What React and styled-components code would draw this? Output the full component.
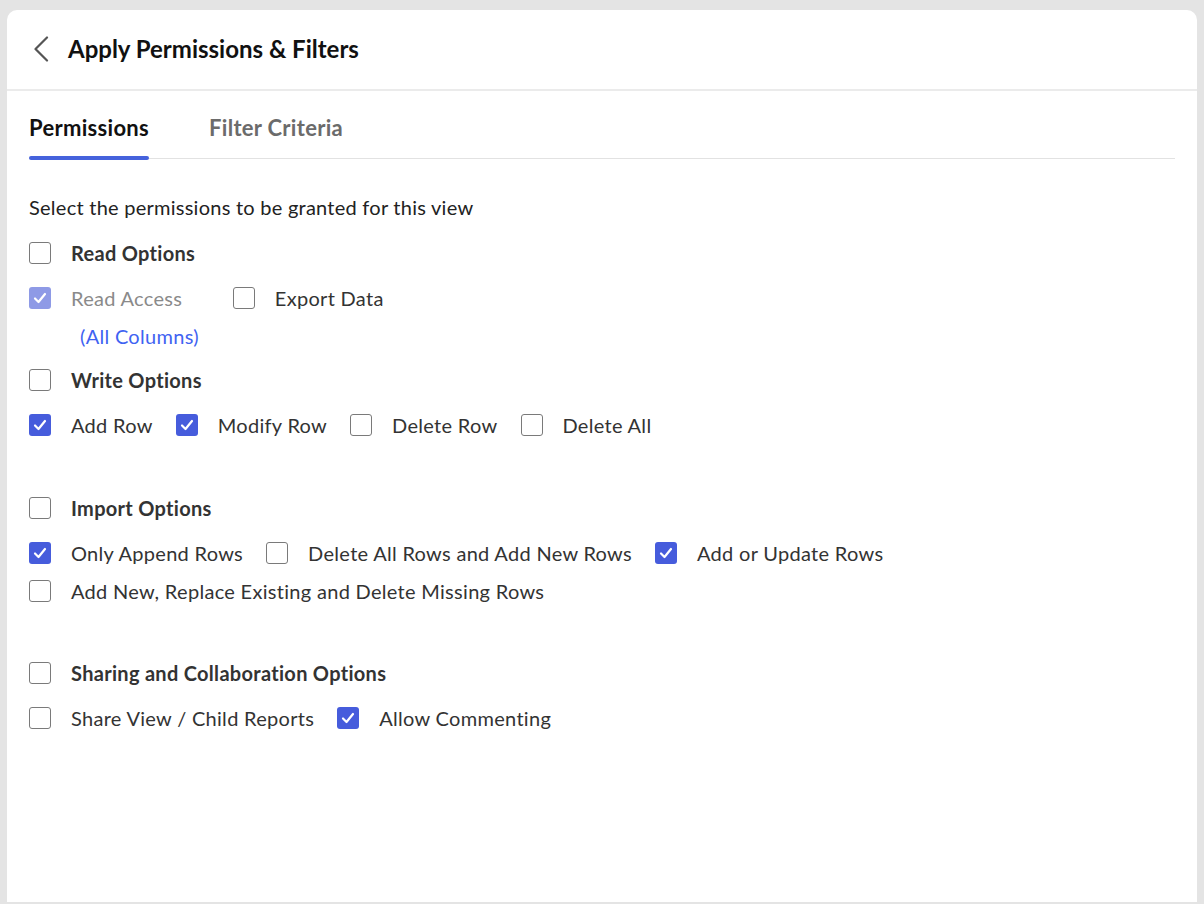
import React from 'react'
import styled, { createGlobalStyle } from 'styled-components'

const GlobalStyle = createGlobalStyle`
  html, body {
    margin: 0;
    padding: 0;
    background: #e4e4e4;
    font-family: Lato, "Noto Sans", sans-serif;
  }
  * { box-sizing: border-box; }
`

const Frame = styled.div`
  height: 904px;
  padding: 10px 7px 2px 7px;
  background: #e4e4e4;
`

const Panel = styled.div`
  height: 100%;
  background: #ffffff;
  border-radius: 10px 10px 0 0;
  display: flex;
  flex-direction: column;
  overflow: hidden;
`

const Header = styled.div`
  height: 81px;
  display: flex;
  align-items: center;
  gap: 19px;
  padding: 0 0 2px 26px;
  border-bottom: 2px solid #ebebeb;
`

const BackButton = styled.button`
  border: none;
  background: none;
  padding: 0;
  width: 16px;
  height: 26px;
  display: flex;
  align-items: center;
  justify-content: center;
  cursor: pointer;
`

const Title = styled.h1`
  margin: 0;
  font-size: 24px;
  font-weight: 700;
  color: #111;
`

const Body = styled.div`
  padding: 0 22px;
  flex: 1;
`

const TabBar = styled.div`
  display: flex;
  gap: 60px;
  height: 68px;
  border-bottom: 1px solid #e2e2e2;
`

const Tab = styled.div`
  position: relative;
  display: flex;
  align-items: center;
  padding-top: 6px;
  font-size: 22px;
  letter-spacing: 0.3px;
  font-weight: 700;
  color: ${p => (p.$active ? '#111' : '#6b6b6b')};
  cursor: pointer;

  &::after {
    content: '';
    display: ${p => (p.$active ? 'block' : 'none')};
    position: absolute;
    left: 0;
    right: 0;
    bottom: -2px;
    height: 4px;
    border-radius: 2px;
    background: #4562dc;
  }
`

const Intro = styled.p`
  margin: 36px 0 22px;
  font-size: 20px;
  letter-spacing: 0.25px;
  line-height: 24px;
  color: #222;
`

const Section = styled.div`
  display: flex;
  flex-direction: column;
  gap: 21px;
  margin-bottom: ${p => p.$space}px;
`

const OptionRow = styled.div`
  display: flex;
  flex-wrap: wrap;
  align-items: flex-start;
  column-gap: 23px;
  row-gap: 14px;
`

const Item = styled.label`
  display: flex;
  flex-direction: column;
  padding-right: ${p => p.$extra || 0}px;
`

const Line = styled.span`
  display: flex;
  align-items: center;
  gap: 20px;
  font-size: 20px;
  letter-spacing: 0.3px;
  line-height: 24px;
  font-weight: ${p => (p.$heading ? 700 : 400)};
  color: ${p => (p.$muted ? '#8a8a8a' : '#333')};
`

const Box = styled.span`
  width: 22px;
  height: 22px;
  flex: none;
  border-radius: 3px;
  display: flex;
  align-items: center;
  justify-content: center;
  border: 1px solid ${p => (p.$checked ? 'transparent' : '#7a7a7a')};
  background: ${p => (p.$checked ? (p.$disabled ? '#8e9ae6' : '#465cdc') : '#fff')};
`

const SubLabel = styled.span`
  margin: 14px 0 0 51px;
  font-size: 20px;
  letter-spacing: 0.3px;
  line-height: 24px;
  color: #3f63f2;
`

function Check({ checked, disabled }) {
  return (
    <Box $checked={checked} $disabled={disabled}>
      {checked && (
        <svg width="14" height="12" viewBox="0 0 14 12">
          <polyline points="2,6.5 5.5,10 12,2" fill="none" stroke="#fff" strokeWidth="2.2" strokeLinecap="round" strokeLinejoin="round" />
        </svg>
      )}
    </Box>
  )
}

function Option({ label, checked, disabled, heading, sub, extra }) {
  return (
    <Item $extra={extra}>
      <Line $heading={heading} $muted={disabled}>
        <Check checked={checked} disabled={disabled} />
        {label}
      </Line>
      {sub && <SubLabel>{sub}</SubLabel>}
    </Item>
  )
}

const sections = [
  {
    title: 'Read Options',
    space: 20,
    options: [
      { label: 'Read Access', checked: true, disabled: true, sub: '(All Columns)', extra: 11 },
      { label: 'Export Data' },
    ],
  },
  {
    title: 'Write Options',
    space: 59,
    options: [
      { label: 'Add Row', checked: true },
      { label: 'Modify Row', checked: true },
      { label: 'Delete Row' },
      { label: 'Delete All' },
    ],
  },
  {
    title: 'Import Options',
    space: 58,
    options: [
      { label: 'Only Append Rows', checked: true },
      { label: 'Delete All Rows and Add New Rows' },
      { label: 'Add or Update Rows', checked: true },
      { label: 'Add New, Replace Existing and Delete Missing Rows' },
    ],
  },
  {
    title: 'Sharing and Collaboration Options',
    space: 0,
    options: [
      { label: 'Share View / Child Reports' },
      { label: 'Allow Commenting', checked: true },
    ],
  },
]

export default function App() {
  return (
    <>
      <GlobalStyle />
      <Frame>
        <Panel>
          <Header>
            <BackButton aria-label="Back">
              <svg width="16" height="26" viewBox="0 0 16 26">
                <polyline points="14,1.5 2.5,13 14,24.5" fill="none" stroke="#555" strokeWidth="2.2" strokeLinecap="round" strokeLinejoin="round" />
              </svg>
            </BackButton>
            <Title>Apply Permissions &amp; Filters</Title>
          </Header>
          <Body>
            <TabBar>
              <Tab $active>Permissions</Tab>
              <Tab>Filter Criteria</Tab>
            </TabBar>
            <Intro>Select the permissions to be granted for this view</Intro>
            {sections.map(s => (
              <Section key={s.title} $space={s.space}>
                <OptionRow>
                  <Option label={s.title} heading />
                </OptionRow>
                <OptionRow>
                  {s.options.map(o => (
                    <Option key={o.label} {...o} />
                  ))}
                </OptionRow>
              </Section>
            ))}
          </Body>
        </Panel>
      </Frame>
    </>
  )
}
